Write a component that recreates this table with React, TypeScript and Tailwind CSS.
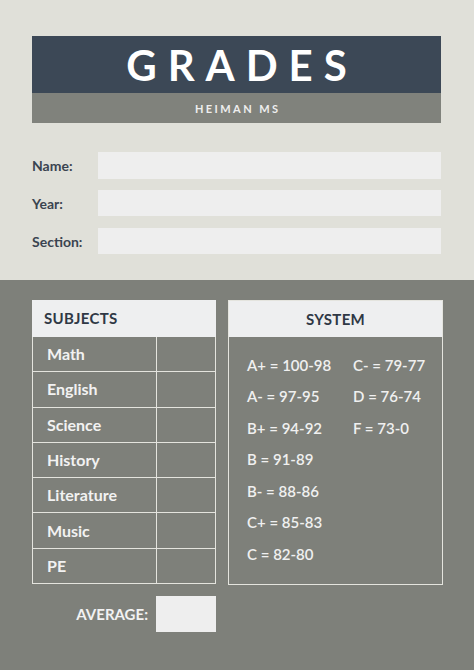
import React from "react";

const subjects = ["Math", "English", "Science", "History", "Literature", "Music", "PE"];
const left = ["A+ = 100-98", "A- = 97-95", "B+ = 94-92", "B = 91-89", "B- = 88-86", "C+ = 85-83", "C = 82-80"];
const right = ["C- = 79-77", "D = 76-74", "F = 73-0"];

export default function App() {
  return (
    <div className="w-[474px] h-[670px] overflow-hidden bg-[#7e807a]" style={{ fontFamily: "Lato, 'Open Sans', sans-serif" }}>
      <div className="h-[280px] bg-[#e0e0d9] pt-[36px] pl-[32px] pr-[33px]">
        <div className="h-[57px] bg-[#3c4856] flex items-center justify-center">
          <span className="text-white text-[42px] font-bold tracking-[0.26em] pl-[0.26em] leading-none">GRADES</span>
        </div>
        <div className="h-[30px] bg-[#80827c] flex items-center justify-center">
          <span className="text-[#eeeeee] text-[11px] font-bold tracking-[0.22em] pl-[0.22em] leading-none">HEIMAN MS</span>
        </div>
        <div className="mt-[29px] flex flex-col">
          <div className="flex items-center h-[27px]">
            <div className="w-[66px] text-[14px] font-bold text-[#3a4450]">Name:</div>
            <div className="flex-1 h-full bg-[#eeeeee]" />
          </div>
          <div className="flex items-center h-[26px] mt-[11px]">
            <div className="w-[66px] text-[14px] font-bold text-[#3a4450]">Year:</div>
            <div className="flex-1 h-full bg-[#eeeeee]" />
          </div>
          <div className="flex items-center h-[26px] mt-[12px]">
            <div className="w-[66px] text-[14px] font-bold text-[#3a4450]">Section:</div>
            <div className="flex-1 h-full bg-[#eeeeee]" />
          </div>
        </div>
      </div>
      <div className="pt-[20px] pl-[32px] flex gap-[12px]">
        <div className="w-[184px] flex flex-col">
          <div className="h-[37px] bg-[#eeeff0] flex items-center pl-[12px] text-[15px] font-bold tracking-[0.02em] text-[#2f3845]">SUBJECTS</div>
          <div className="border-l border-r border-[#e4e4de]">
            {subjects.map((s) => (
              <div key={s} className="flex h-[35.3px] border-b border-[#e4e4de]">
                <div className="w-[124px] border-r border-[#e4e4de] flex items-center pl-[14px] text-[16px] font-bold text-[#f2f2f2]">{s}</div>
                <div className="flex-1" />
              </div>
            ))}
          </div>
          <div className="flex items-center mt-[12px] h-[36px]">
            <div className="w-[124px] pr-[8px] text-right text-[15px] font-bold text-[#f2f2f2]">AVERAGE:</div>
            <div className="flex-1 h-full bg-[#eeeeee]" />
          </div>
        </div>
        <div className="w-[215px] h-[285px] border border-[#e4e4de] flex flex-col">
          <div className="h-[36px] bg-[#eeeff0] flex items-center justify-center text-[15px] font-bold tracking-[0.02em] text-[#2f3845]">SYSTEM</div>
          <div className="flex pt-[12px] pl-[18px]">
            <div className="w-[106px] flex flex-col">
              {left.map((t) => (
                <div key={t} className="h-[31.5px] flex items-center text-[15px] font-semibold text-[#f0f0f0] whitespace-nowrap">{t}</div>
              ))}
            </div>
            <div className="flex flex-col">
              {right.map((t) => (
                <div key={t} className="h-[31.5px] flex items-center text-[15px] font-semibold text-[#f0f0f0] whitespace-nowrap">{t}</div>
              ))}
            </div>
          </div>
        </div>
      </div>
    </div>
  );
}
